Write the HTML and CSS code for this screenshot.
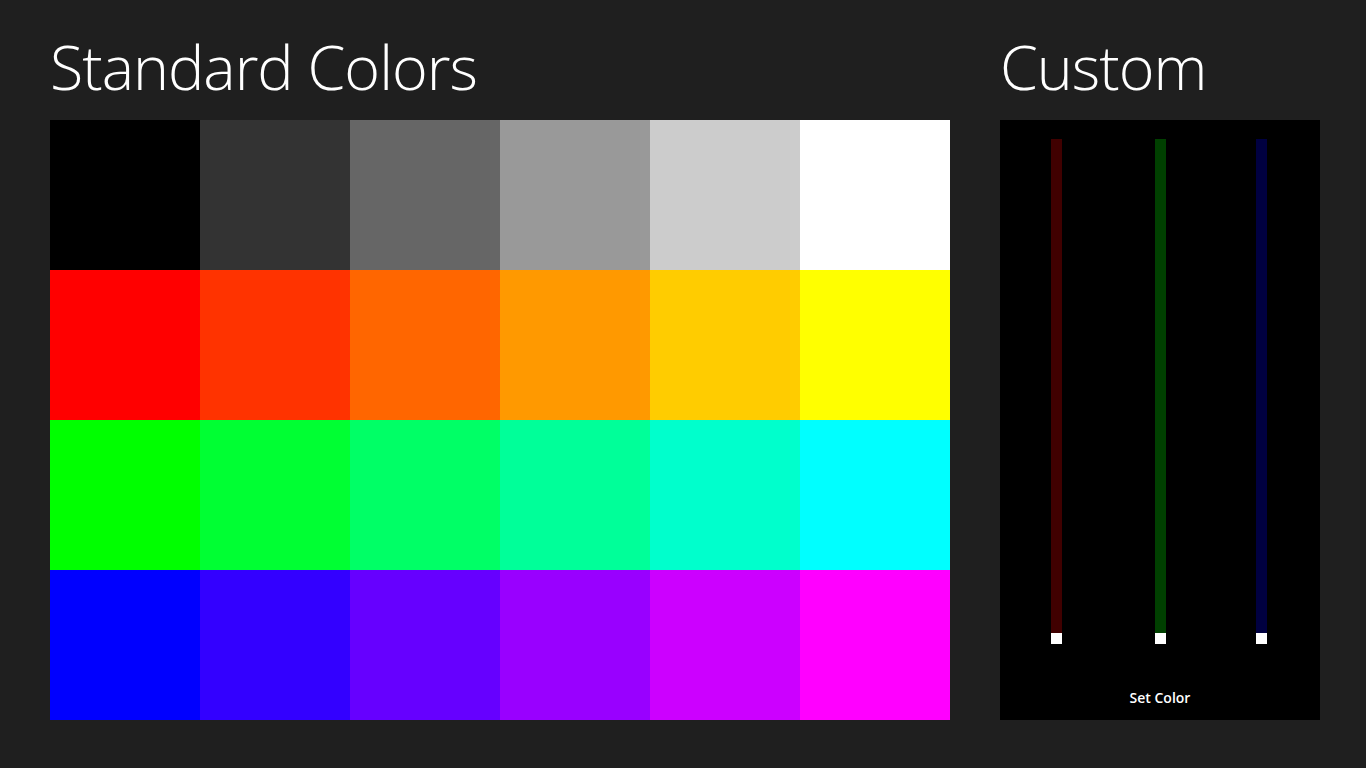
FILE: index.html
```html
<!DOCTYPE html>
<html>
<head>
<meta charset="utf-8">
<link rel="stylesheet" href="styles.css">
</head>
<body>
<div class="page">
  <section class="standard">
    <h1 class="title">Standard Colors</h1>
    <div class="grid">
      <div class="sw" style="background:#000000"></div>
      <div class="sw" style="background:#333333"></div>
      <div class="sw" style="background:#666666"></div>
      <div class="sw" style="background:#999999"></div>
      <div class="sw" style="background:#cccccc"></div>
      <div class="sw" style="background:#ffffff"></div>
      <div class="sw" style="background:#ff0000"></div>
      <div class="sw" style="background:#ff3300"></div>
      <div class="sw" style="background:#ff6600"></div>
      <div class="sw" style="background:#ff9900"></div>
      <div class="sw" style="background:#ffcc00"></div>
      <div class="sw" style="background:#ffff00"></div>
      <div class="sw" style="background:#00ff00"></div>
      <div class="sw" style="background:#00ff33"></div>
      <div class="sw" style="background:#00ff66"></div>
      <div class="sw" style="background:#00ff99"></div>
      <div class="sw" style="background:#00ffcc"></div>
      <div class="sw" style="background:#00ffff"></div>
      <div class="sw" style="background:#0000ff"></div>
      <div class="sw" style="background:#3300ff"></div>
      <div class="sw" style="background:#6600ff"></div>
      <div class="sw" style="background:#9900ff"></div>
      <div class="sw" style="background:#cc00ff"></div>
      <div class="sw" style="background:#ff00ff"></div>
    </div>
  </section>
  <section class="custom">
    <h1 class="title">Custom</h1>
    <div class="panel">
      <div class="sliders">
        <div class="slider r"><div class="track"></div><div class="thumb"></div></div>
        <div class="slider g"><div class="track"></div><div class="thumb"></div></div>
        <div class="slider b"><div class="track"></div><div class="thumb"></div></div>
      </div>
      <div class="setcolor">Set Color</div>
    </div>
  </section>
</div>
</body>
</html>
```
FILE: styles.css
```css
html, body {
  margin: 0;
  padding: 0;
  background: #1f1f1f;
  width: 1366px;
  height: 768px;
  overflow: hidden;
}
.page {
  display: flex;
  padding-left: 50px;
  gap: 50px;
}
.title {
  margin: 0;
  height: 120px;
  box-sizing: border-box;
  padding-top: 30px;
  font-family: "Open Sans", "Noto Sans", sans-serif;
  font-weight: 300;
  font-size: 61px;
  line-height: 74px;
  color: #ffffff;
  letter-spacing: -1px;
  white-space: nowrap;
}
.grid {
  display: grid;
  grid-template-columns: repeat(6, 150px);
  grid-template-rows: repeat(4, 150px);
  width: 900px;
}
.custom {
  width: 320px;
}
.panel {
  width: 320px;
  height: 600px;
  background: #000000;
  display: flex;
  flex-direction: column;
}
.sliders {
  display: flex;
  padding-top: 19px;
}
.slider {
  width: 11px;
  display: flex;
  flex-direction: column;
}
.slider.r { margin-left: 51px; }
.slider.g { margin-left: 93px; }
.slider.b { margin-left: 90px; }
.track {
  height: 494px;
}
.thumb {
  height: 11px;
  background: #ffffff;
}
.r .track { background: #400000; }
.g .track { background: #004000; }
.b .track { background: #000040; }
.setcolor {
  margin-top: 44px;
  text-align: center;
  font-family: "Open Sans", "Noto Sans", sans-serif;
  font-weight: 600;
  font-size: 14px;
  line-height: 20px;
  color: #ffffff;
}
```
